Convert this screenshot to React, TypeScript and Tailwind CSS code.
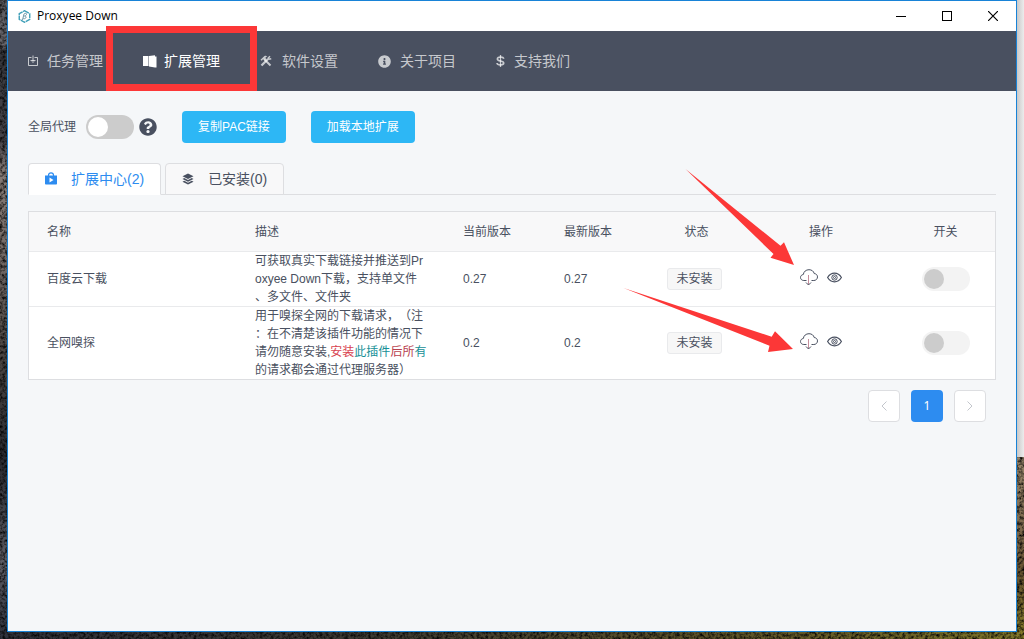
import { useState } from "react";
import type { ReactNode } from "react";
import { FaInfoCircle, FaQuestionCircle } from "react-icons/fa";

/* ---------- icons ---------- */

function LogoIcon() {
  return (
    <svg className="h-[13px] w-[13px]" viewBox="0 0 26 26" fill="none" aria-hidden>
      <path d="M13 1.500 23.500 7.500v11L13 24.500 2.500 18.500v-11z" stroke="#3f9fb8" strokeWidth="2.800" strokeDasharray="10 1.200" />
      <path d="M9 20 12 8c1-2 6-2 5 1-.5 2-3 3-4 3 3 0 4 2 2.500 4s-3.500 1.500-5 1" stroke="#6f98a8" strokeWidth="2" />
    </svg>
  );
}

function TaskIcon() {
  return (
    <svg className="h-3 w-[10px]" viewBox="0 0 10 12" fill="none" stroke="currentColor" aria-hidden>
      <path d="M3.500 2.500h-3v8h9v-8h-3M5 0.500v6M2.500 5.500h5M4 6.500l1 1 1-1" />
    </svg>
  );
}

function BookIcon() {
  return (
    <svg className="h-[13px] w-[14px]" viewBox="0 0 14 13" fill="currentColor" aria-hidden>
      <path d="M0 1h5.500v10H0zM6 1l6-.8V1.500h1.500v11H12L6 11.500z" />
    </svg>
  );
}

function ToolsIcon() {
  return (
    <svg className="h-3 w-3" viewBox="0 0 24 24" fill="none" stroke="currentColor" aria-hidden>
      <path d="M3 21 16 8" strokeWidth="4.500" />
      <path d="M20 2.500 16.500 6l1.500 2.500 4.500-1" strokeWidth="3" />
      <path d="m9 9 12 12" strokeWidth="4" />
      <path d="M1 9.500 9 2c2-.8 4-.5 5.500.5L11 5l1 3-3 3-3-2.500-2.500 3z" fill="currentColor" stroke="none" />
    </svg>
  );
}

function DollarIcon() {
  return (
    <svg className="h-3 w-[9px]" viewBox="0 0 9 12" fill="none" stroke="currentColor" aria-hidden>
      <path d="M7.800 3.800C7.500 2.500 6.200 2 4.500 2S1.400 2.700 1.400 4c0 1.400 1.400 1.700 3.100 2s3.200.7 3.200 2.100S6.200 10 4.500 10 1.200 9.400 1 8" strokeWidth="1.700" />
      <path d="M4.500 0v12" strokeWidth="1.300" />
    </svg>
  );
}

function BagIcon() {
  return (
    <svg className="h-[14px] w-[12px]" viewBox="0 0 12 14" aria-hidden>
      <path d="M3.500 4.500V3.200C3.500 1.600 4.600.8 6 .8s2.500.8 2.500 2.400v1.300" fill="none" stroke="currentColor" strokeWidth="1.200" />
      <path fill="currentColor" fillRule="evenodd" d="M0 3.500h12v8.200c0 .5-.3.800-.8.800H.8c-.5 0-.8-.3-.8-.8zM4.500 5.500v5L8.500 8z" />
    </svg>
  );
}

function LayersIcon() {
  return (
    <svg className="h-3 w-3" viewBox="0 0 24 24" fill="currentColor" aria-hidden>
      <path d="m12 1 11 5.500L12 12 1 6.500z" />
      <path d="m1 12 3.500-1.800L12 14l7.500-3.800L23 12l-11 5.500z" />
      <path d="m1 17.500 3.500-1.800 7.500 3.800 7.500-3.800 3.500 1.800L12 23z" />
    </svg>
  );
}

function CloudDownloadIcon() {
  return (
    <svg className="h-[17px] w-[18px]" viewBox="0 0 18 17" fill="none" stroke="#495060" aria-hidden>
      <path d="M6.500 11.500H3.800C1.900 11.500.5 10.200.5 8.500c0-1.600 1.200-2.800 2.800-3C3.700 2.700 5.900.7 9 .7c2.600 0 4.700 1.500 5.200 3.800 1.900.2 3.300 1.600 3.300 3.400 0 2-1.500 3.600-3.700 3.600h-2.300" />
      <path d="M8.500 6v9.800" stroke="#c58d9c" />
      <path d="m6 13.500 2.500 2.500 2.500-2.500" />
    </svg>
  );
}

function EyeIcon() {
  return (
    <svg className="h-[11px] w-[15px]" viewBox="0 0 15 11" fill="none" stroke="#495060" aria-hidden>
      <path d="M.6 5.500C2.300 2.700 4.700 1.200 7.500 1.200s5.200 1.500 6.900 4.300C12.700 8.300 10.300 9.800 7.500 9.800S2.300 8.300.6 5.500z" strokeWidth="1.200" />
      <circle cx="7.500" cy="5.500" r="2.700" />
      <circle cx="7.500" cy="5.500" r="1" />
    </svg>
  );
}

/* ---------- data ---------- */

const NAV: { label: string; icon: ReactNode; box: string }[] = [
  { label: "任务管理", icon: <TaskIcon />, box: "w-[13px]" },
  { label: "扩展管理", icon: <BookIcon />, box: "w-[15px]" },
  { label: "软件设置", icon: <ToolsIcon />, box: "w-4" },
  { label: "关于项目", icon: <FaInfoCircle size={13} />, box: "w-4" },
  { label: "支持我们", icon: <DollarIcon />, box: "w-3" }
];

const EXTENSIONS = [
  {
    name: "百度云下载",
    desc: <>可获取真实下载链接并推送到Proxyee Down下载，支持单文件、多文件、文件夹</>,
    current: "0.27",
    latest: "0.27"
  },
  {
    name: "全网嗅探",
    desc: (
      <>
        用于嗅探全网的下载请求，（注：在不清楚该插件功能的情况下请勿随意安装,
        <span className="text-[#d8424f]">安装</span>
        <span className="text-[#168f96]">此插件</span>
        <span className="text-[#b8414e]">后所</span>
        <span className="text-[#168f96]">有</span>
        的请求都会通过代理服务器）
      </>
    ),
    current: "0.2",
    latest: "0.2"
  }
];

/* ---------- pieces ---------- */

function Backdrop() {
  return (
    <svg className="absolute inset-0 h-full w-full" preserveAspectRatio="none" viewBox="0 0 1024 639" aria-hidden>
      <defs>
        <linearGradient id="left" x1="0" y1="0" x2="0" y2="1">
          <stop offset="0" stopColor="#5b5a60" />
          <stop offset="0.070" stopColor="#69686e" />
          <stop offset="0.080" stopColor="#35363b" />
          <stop offset="0.220" stopColor="#45444a" />
          <stop offset="0.270" stopColor="#857b76" />
          <stop offset="0.400" stopColor="#736a66" />
          <stop offset="0.550" stopColor="#4b4643" />
          <stop offset="0.720" stopColor="#2a2b31" />
          <stop offset="0.880" stopColor="#5c5c64" />
          <stop offset="1" stopColor="#2d303b" />
        </linearGradient>
        <linearGradient id="floor" x1="0" y1="0" x2="1" y2="0">
          <stop offset="0" stopColor="#30313a" />
          <stop offset="0.350" stopColor="#3a3832" />
          <stop offset="0.700" stopColor="#5b5128" />
          <stop offset="1" stopColor="#7c7328" />
        </linearGradient>
        <linearGradient id="rock" x1="0" y1="0" x2="0" y2="1">
          <stop offset="0" stopColor="#96846a" />
          <stop offset="0.400" stopColor="#7b684c" />
          <stop offset="0.650" stopColor="#66532f" />
          <stop offset="1" stopColor="#857b28" />
        </linearGradient>
        <linearGradient id="shade" x1="0" y1="0" x2="1" y2="0">
          <stop offset="0" stopColor="#c9c9c9" />
          <stop offset="1" stopColor="#ececec" />
        </linearGradient>
        <filter id="grain">
          <feTurbulence type="fractalNoise" baseFrequency="0.350" numOctaves="3" />
          <feColorMatrix type="matrix" values="0 0 0 0 0  0 0 0 0 0  0 0 0 0 0  2 0 0 0 -0.750" />
        </filter>
      </defs>
      <rect width="1024" height="639" fill="url(#floor)" />
      <rect width="8" height="639" fill="url(#left)" />
      <rect x="1016" y="457" width="8" height="182" fill="url(#rock)" />
      <rect width="1024" height="639" filter="url(#grain)" />
      <rect x="1017" width="7" height="457" fill="url(#shade)" />
    </svg>
  );
}

function TitleBar() {
  const button = "flex h-[30px] w-[46px] items-center justify-center";
  return (
    <header className="flex h-[30px] items-center bg-white pl-[10px] text-black">
      <LogoIcon />
      <h1 className="ml-[6px] flex-1 font-['Open_Sans','Noto_Sans',sans-serif] text-[12px] leading-[18px]">
        Proxyee Down
      </h1>
      <button type="button" aria-label="最小化" className={button}>
        <span className="h-px w-[10px] bg-black" />
      </button>
      <button type="button" aria-label="最大化" className={button}>
        <span className="h-[10px] w-[10px] border border-black" />
      </button>
      <button type="button" aria-label="关闭" className={button}>
        <svg className="h-[10px] w-[10px]" viewBox="0 0 10 10" stroke="#000" strokeWidth="1.200" aria-hidden>
          <path d="m0 0 10 10M10 0 0 10" />
        </svg>
      </button>
    </header>
  );
}

function NavBar() {
  return (
    <nav className="bg-[#495060]">
      <ul className="flex">
        {NAV.map((item, i) => (
          <li key={item.label} className="relative">
            <a
              href="#"
              className={`flex h-[60px] items-center gap-[6px] px-5 text-[14px] leading-5 ${
                i === 1 ? "text-white" : "text-white/70"
              }`}
            >
              <span className={`flex ${item.box}`}>{item.icon}</span>
              {item.label}
            </a>
            {i === 1 && (
              <span className="pointer-events-none absolute -inset-x-[17px] -top-[5px] bottom-0 z-10 border-[7px] border-[#fc3737]" />
            )}
          </li>
        ))}
      </ul>
    </nav>
  );
}

function Pointers() {
  return (
    <svg
      className="pointer-events-none absolute top-[164px] right-[216px] h-[195px] w-[180px]"
      viewBox="620 165 180 195"
      fill="#fc3737"
      aria-hidden
    >
      <path d="M685.500 169 780.500 245.700 784 242.300 794 265 770.500 257.700 773.500 254z" />
      <path d="M623.500 288 771.700 336.700 775 331.300 793 349 768 352 769.500 345.700z" />
    </svg>
  );
}

const SWITCH =
  "block h-6 w-12 appearance-none rounded-full bg-[#ccc] p-[2px] before:block before:h-5 before:w-5 before:rounded-full before:bg-white checked:bg-[#2d8cf0] checked:before:ml-6 disabled:bg-[#f3f3f3] disabled:before:bg-[#ccc]";

function Controls() {
  const [proxy, setProxy] = useState(false);
  const button = "h-8 rounded bg-[#2db7f5] px-4 text-[12px] leading-[18px] text-white";
  return (
    <div className="flex items-center">
      <label htmlFor="proxy">全局代理</label>
      <input
        id="proxy"
        type="checkbox"
        role="switch"
        checked={proxy}
        onChange={(e) => setProxy(e.target.checked)}
        className={`ml-[10px] ${SWITCH}`}
      />
      <button type="button" aria-label="帮助" className="ml-[5px]">
        <FaQuestionCircle size={18} />
      </button>
      <button type="button" className={`ml-[25px] ${button}`}>复制PAC链接</button>
      <button type="button" className={`ml-[25px] ${button}`}>加载本地扩展</button>
    </div>
  );
}

function Tabs() {
  const tab = "-mb-px flex h-8 items-center gap-3 rounded-t border border-[#dddee1] px-4 text-[14px] leading-5";
  return (
    <div role="tablist" className="mt-5 flex h-8 gap-1 border-b border-[#dddee1]">
      <button type="button" role="tab" aria-selected="true" className={`${tab} border-b-white bg-white text-[#2d8cf0]`}>
        <span className="flex w-[14px]"><BagIcon /></span>
        扩展中心(2)
      </button>
      <button type="button" role="tab" aria-selected="false" className={`${tab} bg-[#f8f8f9]`}>
        <span className="flex w-[14px]"><LayersIcon /></span>
        已安装(0)
      </button>
    </div>
  );
}

function ExtensionTable() {
  const th = "h-10 border-b border-[#e9eaec] bg-[#f8f8f9] px-[18px] font-normal";
  return (
    <div className="mt-4 border border-[#dddee1] bg-white">
      <table className="w-full table-fixed border-separate border-spacing-0 text-left">
        <colgroup>
          <col />
          <col />
          <col className="w-[101px]" />
          <col className="w-[101px]" />
          <col className="w-[99px]" />
          <col className="w-[150px]" />
          <col className="w-[99px]" />
        </colgroup>
        <thead>
          <tr>
            <th className={th}>名称</th>
            <th className={th}>描述</th>
            <th className={th}>当前版本</th>
            <th className={th}>最新版本</th>
            <th className={`${th} text-center`}>状态</th>
            <th className={`${th} text-center`}>操作</th>
            <th className={`${th} text-center`}>开关</th>
          </tr>
        </thead>
        <tbody className="[&>tr:first-child>td]:border-b [&>tr>td]:border-[#e9eaec]">
          {EXTENSIONS.map((ext) => (
            <tr key={ext.name}>
              <td className="px-[18px]">{ext.name}</td>
              <td className="px-[18px] break-all [line-break:anywhere] [text-spacing-trim:space-all]">{ext.desc}</td>
              <td className="px-[18px]">{ext.current}</td>
              <td className="px-[18px]">{ext.latest}</td>
              <td>
                <div className="flex justify-center pr-1">
                  <span className="rounded-[3px] border border-[#e9eaec] bg-[#f7f7f7] px-2 py-px">未安装</span>
                </div>
              </td>
              <td>
                <div className="flex items-center justify-center gap-[9px] pb-1">
                  <button type="button" aria-label={`安装 ${ext.name}`}><CloudDownloadIcon /></button>
                  <button type="button" aria-label={`查看 ${ext.name}`}><EyeIcon /></button>
                </div>
              </td>
              <td>
                <div className="flex justify-center">
                  <input type="checkbox" role="switch" disabled aria-label={`启用 ${ext.name}`} className={SWITCH} />
                </div>
              </td>
            </tr>
          ))}
        </tbody>
      </table>
    </div>
  );
}

function Pager() {
  const arrow = "flex h-8 w-8 items-center justify-center rounded border border-[#dddee1] bg-white text-[#c3c6cc]";
  return (
    <nav aria-label="分页" className="mt-[10px] flex justify-end gap-[11px] pr-[10px]">
      <button type="button" disabled aria-label="上一页" className={arrow}>
        <svg className="h-[10px] w-[6px]" viewBox="0 0 6 10" fill="none" stroke="currentColor" aria-hidden>
          <path d="M5.500.5 1 5l4.500 4.500" />
        </svg>
      </button>
      <button
        type="button"
        aria-current="page"
        className="h-8 w-8 rounded bg-[#2d8cf0] font-['Noto_Sans',sans-serif] text-[12px] leading-[18px] text-white"
      >
        1
      </button>
      <button type="button" disabled aria-label="下一页" className={arrow}>
        <svg className="h-[10px] w-[6px]" viewBox="0 0 6 10" fill="none" stroke="currentColor" aria-hidden>
          <path d="M.5.5 5 5 .5 9.500" />
        </svg>
      </button>
    </nav>
  );
}

export default function App() {
  return (
    <div
      lang="zh-CN"
      className="relative flex min-h-screen px-[7px] pb-[7px] font-['Liberation_Sans','Noto_Sans_CJK_SC',sans-serif] text-[12px] leading-[18px] text-[#495060]"
    >
      <Backdrop />
      <div className="relative flex flex-1 flex-col border border-[#1883d7] bg-[#f5f7f9]">
        <TitleBar />
        <NavBar />
        <main className="flex-1 p-5">
          <Controls />
          <Tabs />
          <ExtensionTable />
          <Pager />
        </main>
        <Pointers />
      </div>
    </div>
  );
}
